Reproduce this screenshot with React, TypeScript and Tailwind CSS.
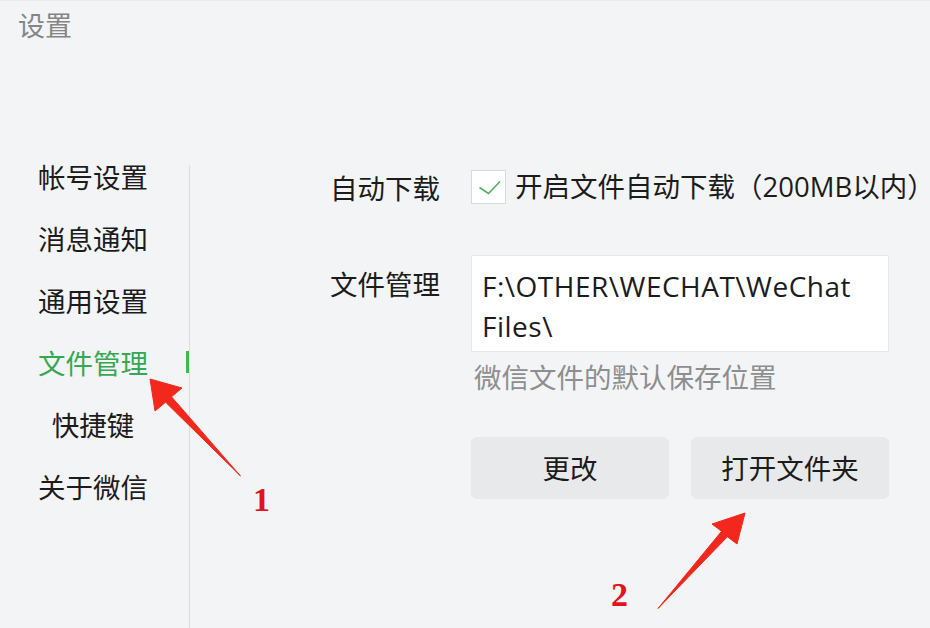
const FONT = "font-['Noto_Sans_CJK_SC','Noto_Sans',sans-serif]";
const LATIN = "font-['Open_Sans','Noto_Sans_CJK_SC',sans-serif]";

const menu = ['帐号设置', '消息通知', '通用设置', '文件管理', '快捷键', '关于微信'];
const active = '文件管理';

function Check() {
  return (
    <div className="w-[35px] h-[34px] bg-white border border-[#d9d9d9] mr-[9px] flex-none">
      <svg width="33" height="32" viewBox="0 0 33 32">
        <path d="M7.5 16.5 L16.5 22.5 L28 10.5" fill="none" stroke="#4caf5e" strokeWidth="1.6" />
      </svg>
    </div>
  );
}

function Annotations() {
  return (
    <svg className="absolute inset-0 pointer-events-none" width="930" height="628" viewBox="0 0 930 628">
      <path
        d="M150 378 L182 387 L171.5 395.8 L240.5 475 L165.6 401.2 L155 410 Z"
        fill="#f2281c"
        stroke="#f2281c"
        strokeWidth="1"
        strokeLinejoin="round"
      />
      <path
        d="M745 512 L737 543 L727.4 535.7 L658 607.5 L721.6 530.3 L712 523 Z"
        fill="#f2281c"
        stroke="#f2281c"
        strokeWidth="1"
        strokeLinejoin="round"
      />
      <text x="253" y="510" fontFamily="'Liberation Serif', serif" fontWeight="bold" fontSize="34" fill="#e0141c">
        1
      </text>
      <text x="611" y="605" fontFamily="'Liberation Serif', serif" fontWeight="bold" fontSize="34" fill="#e0141c">
        2
      </text>
    </svg>
  );
}

export default function App() {
  return (
    <div className={`relative w-[930px] h-[628px] overflow-hidden bg-[#f3f4f6] border-t border-[#e9eaec] flex flex-col ${FONT}`}>
      <div className="pl-[18px] pt-[8px] text-[27px] leading-[32px] text-[#858585]">设置</div>

      <div className="flex flex-1 mt-[104px]">
        <div className="w-[189px] flex-none flex flex-col">
          {menu.map((item) => (
            <div key={item} className="h-[62px] flex items-center">
              <span
                className={`flex-1 text-center text-[27.5px] leading-[32px] ${
                  item === active ? 'text-[#36a852]' : 'text-[#1c1c1c]'
                }`}
              >
                {item}
              </span>
              <span className={`w-[3px] h-[22px] ${item === active ? 'bg-[#3dba55]' : 'bg-transparent'}`} />
            </div>
          ))}
        </div>
        <div className="w-px flex-none bg-[#dcdde0] mt-[20px]" />

        <div className="flex-1 min-w-0 pl-[140px] pt-[25px] text-[27.5px] text-[#1c1c1c]">
          <div className="flex items-center h-[34px]">
            <span className="w-[141px] flex-none leading-[40px] whitespace-nowrap">自动下载</span>
            <Check />
            <span className={`leading-[40px] whitespace-nowrap ${LATIN}`}>开启文件自动下载（200MB以内）</span>
          </div>

          <div className="flex mt-[51px]">
            <span className="w-[141px] flex-none pt-[8px] leading-[40px] whitespace-nowrap">文件管理</span>
            <div className="w-[418px] flex-none">
              <div
                className={`h-[97px] bg-white border border-[#e7e8ea] pl-[10px] pr-[8px] pt-[10px] text-[28px] tracking-[0.5px] leading-[40px] ${LATIN}`}
              >
                F:\OTHER\WECHAT\WeChat Files\
              </div>
              <div className="mt-[8px] ml-[3px] leading-[32px] text-[#8e8e8e] whitespace-nowrap">微信文件的默认保存位置</div>
              <div className="flex gap-[22px] mt-[45px]">
                <button className="w-[198px] h-[62px] rounded-[6px] bg-[#e8e9eb] text-[27.5px] text-[#1c1c1c]">更改</button>
                <button className="w-[198px] h-[62px] rounded-[6px] bg-[#e8e9eb] text-[27.5px] text-[#1c1c1c]">打开文件夹</button>
              </div>
            </div>
          </div>
        </div>
      </div>

      <Annotations />
    </div>
  );
}
